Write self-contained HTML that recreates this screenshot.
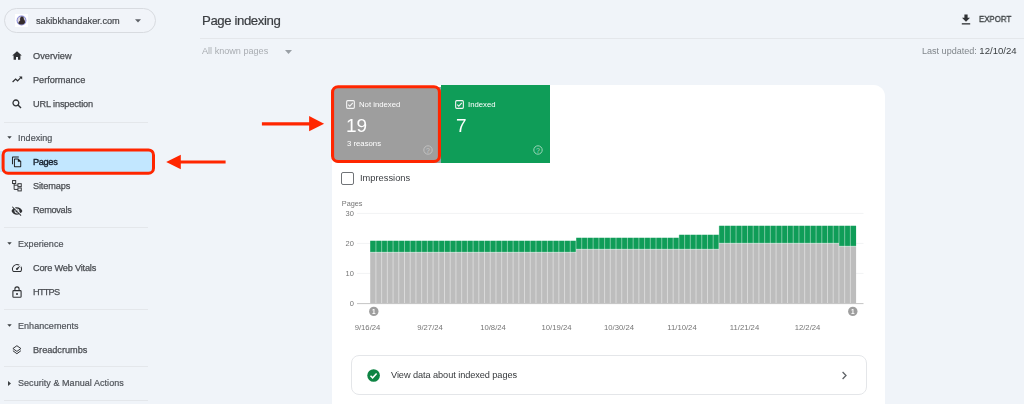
<!DOCTYPE html>
<html lang="en">
<head>
<meta charset="utf-8">
<title>Page indexing</title>
<style>
*{box-sizing:border-box;margin:0;padding:0}
html,body{width:1024px;height:404px;overflow:hidden}
body{background:#f0f4f9;font-family:"Liberation Sans",sans-serif;color:#3c4043;position:relative}
.abs{position:absolute}
.t{position:absolute;white-space:nowrap;line-height:1;will-change:transform}
.nav{font-size:9.2px;font-weight:normal;color:#4a4d52;-webkit-text-stroke:.25px #4a4d52}
.sec{font-size:9px;font-weight:normal;color:#50545a;-webkit-text-stroke:.2px #50545a;letter-spacing:.05px}
.div{position:absolute;height:1px;background:#e4e7eb;left:4px;width:144px}
.ico{position:absolute}
</style>
</head>
<body>

<!-- property selector -->
<div class="abs" style="left:3.6px;top:7.7px;width:152px;height:25.4px;border:1px solid #d8dbe0;border-radius:13px;background:#f1f4f9"></div>
<div class="abs" style="left:14.6px;top:13.8px;width:13.5px;height:13.3px;background:#fff"></div>
<svg class="ico" style="left:16px;top:14.7px" width="11" height="11" viewBox="0 0 11 11"><circle cx="5.5" cy="5.5" r="4.9" fill="#7d80d8"/><circle cx="5.5" cy="5.5" r="4" fill="#ddd6dc"/><path d="M5.9 1.6C7.4 1.6 8 2.8 7.8 4.2C8.9 5 9.3 6.6 8.9 8C7.9 9.2 6.6 9.6 5.5 9.6C4.4 9.6 3.2 9.2 2.3 8.2C2.6 6.8 3.4 6.2 4.2 5.6C3.8 3.6 4.4 1.6 5.9 1.6Z" fill="#352c2d"/></svg>
<div class="t" style="left:35.8px;top:17.1px;font-size:9.2px;color:#45484d;-webkit-text-stroke:.2px #45484d">sakibkhandaker.com</div>
<svg class="ico" style="left:135px;top:19px" width="6" height="4" viewBox="0 0 6 4"><path d="M0 0.3H6L3 3.6Z" fill="#5f6368"/></svg>

<!-- nav -->
<svg class="ico" style="left:12px;top:51px" width="10" height="9" viewBox="0 0 10 9"><path d="M5 0.2L0.2 4.6H1.6V8.8H4V6H6V8.8H8.4V4.6H9.8Z" fill="#2f3134"/></svg>
<div class="t nav" style="left:32.8px;top:51.8px;letter-spacing:0.05px">Overview</div>

<svg class="ico" style="left:12px;top:76px" width="11" height="7" viewBox="0 0 11 7"><path d="M0.6 6L3.6 3L5.6 4.8L9.2 1.2" fill="none" stroke="#2f3134" stroke-width="1.2"/><path d="M7 0.4H10.2V3.6Z" fill="#2f3134"/></svg>
<div class="t nav" style="left:32.8px;top:76.1px;letter-spacing:-0.03px">Performance</div>

<svg class="ico" style="left:12px;top:99px" width="10" height="10" viewBox="0 0 10 10"><circle cx="3.9" cy="3.9" r="2.9" fill="none" stroke="#2f3134" stroke-width="1.3"/><path d="M6 6L9 9" stroke="#2f3134" stroke-width="1.4"/></svg>
<div class="t nav" style="left:32.8px;top:100.4px;letter-spacing:-0.14px">URL inspection</div>

<div class="div" style="top:121.5px"></div>

<svg class="ico" style="left:7px;top:135.5px" width="5" height="3" viewBox="0 0 5 3"><path d="M0.3 0.2H4.7L2.5 2.8Z" fill="#3c4043"/></svg>
<div class="t sec" style="left:18.3px;top:134.0px">Indexing</div>

<!-- Pages highlighted -->
<div class="abs" style="left:0;top:151.4px;width:5px;height:20.4px;background:#c2e7ff"></div>
<svg class="ico" style="left:0;top:146px" width="160" height="32" viewBox="0 146 160 32"><rect x="3.1" y="149.9" width="150.4" height="23.3" rx="5" fill="#c2e7ff" stroke="#ff2600" stroke-width="3"/></svg>
<svg class="ico" style="left:10.7px;top:156.3px" width="11.7" height="11.7" viewBox="0 0 24 24"><path fill="#1f1f1f" d="M16 1H4c-1.1 0-2 .9-2 2v14h2V3h12V1zm-1 4H8c-1.1 0-1.99.9-1.99 2L6 21c0 1.1.89 2 1.99 2H19c1.1 0 2-.9 2-2V11l-6-6zM8 21V7h6v5h5v9H8z"/></svg>
<div class="t nav" style="left:32.8px;top:157.6px;color:#17212e;-webkit-text-stroke:.38px #17212e;letter-spacing:-0.33px">Pages</div>

<svg class="ico" style="left:11.6px;top:180.2px" width="10.2" height="11.7" viewBox="0 0 11 12" preserveAspectRatio="none"><rect x="0.6" y="0.6" width="3.4" height="3" fill="none" stroke="#2f3134" stroke-width="1"/><rect x="6.4" y="3.8" width="3.6" height="3" fill="none" stroke="#2f3134" stroke-width="1"/><rect x="6.4" y="8.2" width="3.6" height="3" fill="none" stroke="#2f3134" stroke-width="1"/><path d="M2.3 3.6V9.7H6.4M2.3 5.3H6.4" fill="none" stroke="#2f3134" stroke-width="1"/></svg>
<div class="t nav" style="left:32.8px;top:182.1px;letter-spacing:-0.15px">Sitemaps</div>

<svg class="ico" style="left:11.1px;top:204.5px" width="11.9" height="11.9" viewBox="0 0 24 24"><path fill="#2f3134" d="M12 7c2.76 0 5 2.24 5 5 0 .65-.13 1.26-.36 1.83l2.92 2.92c1.51-1.26 2.7-2.89 3.43-4.75-1.73-4.39-6-7.5-11-7.5-1.4 0-2.74.25-3.98.7l2.16 2.16C10.74 7.13 11.35 7 12 7zM2 4.27l2.28 2.28.46.46C3.08 8.3 1.78 10.02 1 12c1.73 4.39 6 7.5 11 7.5 1.55 0 3.03-.3 4.38-.84l.42.42L19.73 22 21 20.73 3.27 3 2 4.27zM7.53 9.8l1.55 1.55c-.05.21-.08.43-.08.65 0 1.66 1.34 3 3 3 .22 0 .44-.03.65-.08l1.55 1.55c-.67.33-1.41.53-2.2.53-2.76 0-5-2.24-5-5 0-.79.2-1.53.53-2.2zm4.31-.78l3.15 3.15.02-.16c0-1.66-1.34-3-3-3l-.17.01z"/></svg>
<div class="t nav" style="left:32.8px;top:206.4px;letter-spacing:-0.3px">Removals</div>

<div class="div" style="top:226.5px"></div>

<svg class="ico" style="left:7px;top:241.5px" width="5" height="3" viewBox="0 0 5 3"><path d="M0.3 0.2H4.7L2.5 2.8Z" fill="#3c4043"/></svg>
<div class="t sec" style="left:18.3px;top:240.0px">Experience</div>

<svg class="ico" style="left:10.9px;top:261.8px" width="12" height="12" viewBox="0 0 24 24"><path fill="#2f3134" d="M20.38 8.57l-1.23 1.85a8 8 0 0 1-.22 7.58H5.07A8 8 0 0 1 15.58 6.85l1.85-1.23A10 10 0 0 0 3.35 19a2 2 0 0 0 1.72 1h13.85a2 2 0 0 0 1.74-1 10 10 0 0 0-.27-10.44zm-9.79 6.84a2 2 0 0 0 2.83 0l5.66-8.49-8.49 5.66a2 2 0 0 0 0 2.83z"/></svg>
<div class="t nav" style="left:32.8px;top:264.0px;letter-spacing:-0.2px">Core Web Vitals</div>

<svg class="ico" style="left:12px;top:285.5px" width="10" height="12" viewBox="0 0 10 12"><rect x="0.9" y="4.6" width="8.2" height="6.6" rx="0.8" fill="none" stroke="#2f3134" stroke-width="1.1"/><path d="M2.9 4.6V3A2.1 2.1 0 0 1 7.1 3V4.6" fill="none" stroke="#2f3134" stroke-width="1.1"/><circle cx="5" cy="7.9" r="1" fill="#2f3134"/></svg>
<div class="t nav" style="left:32.8px;top:288.4px;letter-spacing:-0.75px">HTTPS</div>

<div class="div" style="top:308.5px"></div>

<svg class="ico" style="left:7px;top:323.5px" width="5" height="3" viewBox="0 0 5 3"><path d="M0.3 0.2H4.7L2.5 2.8Z" fill="#3c4043"/></svg>
<div class="t sec" style="left:18.3px;top:321.6px">Enhancements</div>

<svg class="ico" style="left:12.1px;top:344.8px" width="9.8" height="9.8" viewBox="0 0 11 11"><path d="M5.5 0.8L10 4L5.5 7.2L1 4Z" fill="none" stroke="#2f3134" stroke-width="1.1"/><path d="M1 6.4L5.5 9.8L10 6.4" fill="none" stroke="#2f3134" stroke-width="1.1"/></svg>
<div class="t nav" style="left:32.8px;top:346.0px;letter-spacing:-0.03px">Breadcrumbs</div>

<div class="div" style="top:366.4px"></div>

<svg class="ico" style="left:8px;top:380.5px" width="3" height="5" viewBox="0 0 3 5"><path d="M0 0V5L3 2.5Z" fill="#3c4043"/></svg>
<div class="t sec" style="left:18.3px;top:379.1px">Security &amp; Manual Actions</div>

<div class="div" style="top:399.9px"></div>

<!-- red arrow to Pages -->
<svg class="ico" style="left:163.6px;top:152px" width="64" height="20" viewBox="0 0 64 20"><path d="M15 10H61.6" stroke="#ff2600" stroke-width="3.2"/><path d="M2.2 10L16.8 2.7V17.2Z" fill="#ff2600"/></svg>

<!-- header -->
<div class="t" style="left:202px;top:14.3px;font-size:13.2px;letter-spacing:-.4px;color:#3a3d41;font-weight:normal;-webkit-text-stroke:.2px #3a3d41">Page indexing</div>
<div class="abs" style="left:200px;top:38.2px;width:824px;height:1px;background:#e4e7eb"></div>
<div class="t" style="left:202.1px;top:47.4px;font-size:9.1px;color:#a9adb2">All known pages</div>
<svg class="ico" style="left:285.2px;top:49.6px" width="7" height="4" viewBox="0 0 7 4"><path d="M0 0H7L3.5 4Z" fill="#9aa0a6"/></svg>

<svg class="ico" style="left:961px;top:14px" width="10" height="11" viewBox="0 0 10 11"><path d="M3.4 0.4H6.6V3.8H9L5 7.8L1 3.8H3.4Z" fill="#2f3134"/><rect x="0.8" y="9.2" width="8.4" height="1.3" fill="#2f3134"/></svg>
<div class="t" style="left:978.6px;top:15.1px;font-size:8.9px;color:#3c4043;-webkit-text-stroke:.32px #3c4043;transform:scaleX(.885);transform-origin:0 0">EXPORT</div>

<div class="t" style="right:7.3px;top:46.1px;font-size:9.05px;color:#80868b">Last updated: <span style="color:#3c4043;font-size:9.6px">12/10/24</span></div>

<!-- card -->
<div class="abs" style="left:331.8px;top:85.3px;width:553.2px;height:330px;background:#fff;border-radius:6px 11.5px 0 0"></div>

<!-- tiles -->
<div class="abs" style="left:332.5px;top:86.5px;width:108.5px;height:76.1px;background:#9e9e9e;border-radius:6px 0 0 6px"></div>
<div class="abs" style="left:441px;top:85.3px;width:109.2px;height:77.3px;background:#0f9d58"></div>
<svg class="ico" style="left:328px;top:82px" width="118" height="84" viewBox="328 82 118 84"><rect x="332.55" y="86.75" width="106.9" height="74.7" rx="5.5" fill="none" stroke="#ff2600" stroke-width="3.1"/></svg>

<!-- red arrow to tile -->
<svg class="ico" style="left:260px;top:114px" width="66" height="20" viewBox="0 0 66 20"><path d="M1.9 9.8H50" stroke="#ff2600" stroke-width="3.3"/><path d="M64.1 9.7L49.1 2.1V17.2Z" fill="#ff2600"/></svg>

<!-- tile text -->
<svg class="ico" style="left:346px;top:100px" width="9" height="9" viewBox="0 0 9 9"><rect x="0.65" y="0.65" width="7.7" height="7.7" rx="1" fill="none" stroke="#f4f4f4" stroke-width="1.1"/><path d="M2.2 4.6L3.8 6.1L6.8 2.8" fill="none" stroke="#f4f4f4" stroke-width="1.1"/></svg>
<div class="t" style="left:358.5px;top:101.1px;font-size:7.75px;color:#fff">Not indexed</div>
<div class="t" style="left:346.4px;top:116px;font-size:19px;color:#fff">19</div>
<div class="t" style="left:346.5px;top:140.4px;font-size:7.75px;color:#fff">3 reasons</div>
<svg class="ico" style="left:423px;top:145px" width="10" height="10" viewBox="0 0 10 10"><circle cx="5" cy="5" r="4.2" fill="none" stroke="#c9c9c9" stroke-width="0.8"/><text x="5" y="7.6" font-family="Liberation Sans, sans-serif" font-size="7" text-anchor="middle" fill="#c9c9c9">?</text></svg>

<svg class="ico" style="left:455px;top:100px" width="9" height="9" viewBox="0 0 9 9"><rect x="0.65" y="0.65" width="7.7" height="7.7" rx="1" fill="none" stroke="#f4f4f4" stroke-width="1.1"/><path d="M2.2 4.6L3.8 6.1L6.8 2.8" fill="none" stroke="#f4f4f4" stroke-width="1.1"/></svg>
<div class="t" style="left:467.5px;top:101.1px;font-size:7.75px;color:#fff">Indexed</div>
<div class="t" style="left:455.7px;top:116px;font-size:19px;color:#fff">7</div>
<svg class="ico" style="left:532.5px;top:145px" width="10" height="10" viewBox="0 0 10 10"><circle cx="5" cy="5" r="4.2" fill="none" stroke="#a8dcc3" stroke-width="0.9"/><text x="5" y="7.6" font-family="Liberation Sans, sans-serif" font-size="7" text-anchor="middle" fill="#a8dcc3">?</text></svg>

<!-- impressions -->
<div class="abs" style="left:341.3px;top:172.4px;width:12.4px;height:12.2px;border:1.3px solid #707377;border-radius:2px;background:#fff"></div>
<div class="t" style="left:359.6px;top:174.2px;font-size:9.3px;color:#3a3d41">Impressions</div>

<!-- chart -->
<!--CHART-->
<svg class="ico" style="left:0;top:0" width="1024" height="404" viewBox="0 0 1024 404">
<g stroke="#f2f3f4" stroke-width="1"><path d="M357 213.4H863.5M357 243.4H863.5M357 273.4H863.5"/></g>
<path d="M370.20 252.3h5.72V303.3h-5.72ZM375.92 252.3h5.72V303.3h-5.72ZM381.63 252.3h5.72V303.3h-5.72ZM387.35 252.3h5.72V303.3h-5.72ZM393.07 252.3h5.72V303.3h-5.72ZM398.78 252.3h5.72V303.3h-5.72ZM404.50 252.3h5.72V303.3h-5.72ZM410.22 252.3h5.72V303.3h-5.72ZM415.93 252.3h5.72V303.3h-5.72ZM421.65 252.3h5.72V303.3h-5.72ZM427.36 252.3h5.72V303.3h-5.72ZM433.08 252.3h5.72V303.3h-5.72ZM438.80 252.3h5.72V303.3h-5.72ZM444.51 252.3h5.72V303.3h-5.72ZM450.23 252.3h5.72V303.3h-5.72ZM455.95 252.3h5.72V303.3h-5.72ZM461.66 252.3h5.72V303.3h-5.72ZM467.38 252.3h5.72V303.3h-5.72ZM473.10 252.3h5.72V303.3h-5.72ZM478.81 252.3h5.72V303.3h-5.72ZM484.53 252.3h5.72V303.3h-5.72ZM490.25 252.3h5.72V303.3h-5.72ZM495.96 252.3h5.72V303.3h-5.72ZM501.68 252.3h5.72V303.3h-5.72ZM507.40 252.3h5.72V303.3h-5.72ZM513.11 252.3h5.72V303.3h-5.72ZM518.83 252.3h5.72V303.3h-5.72ZM524.54 252.3h5.72V303.3h-5.72ZM530.26 252.3h5.72V303.3h-5.72ZM535.98 252.3h5.72V303.3h-5.72ZM541.69 252.3h5.72V303.3h-5.72ZM547.41 252.3h5.72V303.3h-5.72ZM553.13 252.3h5.72V303.3h-5.72ZM558.84 252.3h5.72V303.3h-5.72ZM564.56 252.3h5.72V303.3h-5.72ZM570.28 252.3h5.72V303.3h-5.72ZM575.99 249.3h5.72V303.3h-5.72ZM581.71 249.3h5.72V303.3h-5.72ZM587.43 249.3h5.72V303.3h-5.72ZM593.14 249.3h5.72V303.3h-5.72ZM598.86 249.3h5.72V303.3h-5.72ZM604.58 249.3h5.72V303.3h-5.72ZM610.29 249.3h5.72V303.3h-5.72ZM616.01 249.3h5.72V303.3h-5.72ZM621.72 249.3h5.72V303.3h-5.72ZM627.44 249.3h5.72V303.3h-5.72ZM633.16 249.3h5.72V303.3h-5.72ZM638.87 249.3h5.72V303.3h-5.72ZM644.59 249.3h5.72V303.3h-5.72ZM650.31 249.3h5.72V303.3h-5.72ZM656.02 249.3h5.72V303.3h-5.72ZM661.74 249.3h5.72V303.3h-5.72ZM667.46 249.3h5.72V303.3h-5.72ZM673.17 249.3h5.72V303.3h-5.72ZM678.89 249.3h5.72V303.3h-5.72ZM684.61 249.3h5.72V303.3h-5.72ZM690.32 249.3h5.72V303.3h-5.72ZM696.04 249.3h5.72V303.3h-5.72ZM701.76 249.3h5.72V303.3h-5.72ZM707.47 249.3h5.72V303.3h-5.72ZM713.19 249.3h5.72V303.3h-5.72ZM718.90 243.3h5.72V303.3h-5.72ZM724.62 243.3h5.72V303.3h-5.72ZM730.34 243.3h5.72V303.3h-5.72ZM736.05 243.3h5.72V303.3h-5.72ZM741.77 243.3h5.72V303.3h-5.72ZM747.49 243.3h5.72V303.3h-5.72ZM753.20 243.3h5.72V303.3h-5.72ZM758.92 243.3h5.72V303.3h-5.72ZM764.64 243.3h5.72V303.3h-5.72ZM770.35 243.3h5.72V303.3h-5.72ZM776.07 243.3h5.72V303.3h-5.72ZM781.79 243.3h5.72V303.3h-5.72ZM787.50 243.3h5.72V303.3h-5.72ZM793.22 243.3h5.72V303.3h-5.72ZM798.94 243.3h5.72V303.3h-5.72ZM804.65 243.3h5.72V303.3h-5.72ZM810.37 243.3h5.72V303.3h-5.72ZM816.08 243.3h5.72V303.3h-5.72ZM821.80 243.3h5.72V303.3h-5.72ZM827.52 243.3h5.72V303.3h-5.72ZM833.23 243.3h5.72V303.3h-5.72ZM838.95 246.3h5.72V303.3h-5.72ZM844.67 246.3h5.72V303.3h-5.72ZM850.38 246.3h5.72V303.3h-5.72Z" fill="#bdbdbd"/>
<path d="M370.20 240.7h5.72V252.3h-5.72ZM375.92 240.7h5.72V252.3h-5.72ZM381.63 240.7h5.72V252.3h-5.72ZM387.35 240.7h5.72V252.3h-5.72ZM393.07 240.7h5.72V252.3h-5.72ZM398.78 240.7h5.72V252.3h-5.72ZM404.50 240.7h5.72V252.3h-5.72ZM410.22 240.7h5.72V252.3h-5.72ZM415.93 240.7h5.72V252.3h-5.72ZM421.65 240.7h5.72V252.3h-5.72ZM427.36 240.7h5.72V252.3h-5.72ZM433.08 240.7h5.72V252.3h-5.72ZM438.80 240.7h5.72V252.3h-5.72ZM444.51 240.7h5.72V252.3h-5.72ZM450.23 240.7h5.72V252.3h-5.72ZM455.95 240.7h5.72V252.3h-5.72ZM461.66 240.7h5.72V252.3h-5.72ZM467.38 240.7h5.72V252.3h-5.72ZM473.10 240.7h5.72V252.3h-5.72ZM478.81 240.7h5.72V252.3h-5.72ZM484.53 240.7h5.72V252.3h-5.72ZM490.25 240.7h5.72V252.3h-5.72ZM495.96 240.7h5.72V252.3h-5.72ZM501.68 240.7h5.72V252.3h-5.72ZM507.40 240.7h5.72V252.3h-5.72ZM513.11 240.7h5.72V252.3h-5.72ZM518.83 240.7h5.72V252.3h-5.72ZM524.54 240.7h5.72V252.3h-5.72ZM530.26 240.7h5.72V252.3h-5.72ZM535.98 240.7h5.72V252.3h-5.72ZM541.69 240.7h5.72V252.3h-5.72ZM547.41 240.7h5.72V252.3h-5.72ZM553.13 240.7h5.72V252.3h-5.72ZM558.84 240.7h5.72V252.3h-5.72ZM564.56 240.7h5.72V252.3h-5.72ZM570.28 240.7h5.72V252.3h-5.72ZM575.99 237.7h5.72V249.3h-5.72ZM581.71 237.7h5.72V249.3h-5.72ZM587.43 237.7h5.72V249.3h-5.72ZM593.14 237.7h5.72V249.3h-5.72ZM598.86 237.7h5.72V249.3h-5.72ZM604.58 237.7h5.72V249.3h-5.72ZM610.29 237.7h5.72V249.3h-5.72ZM616.01 237.7h5.72V249.3h-5.72ZM621.72 237.7h5.72V249.3h-5.72ZM627.44 237.7h5.72V249.3h-5.72ZM633.16 237.7h5.72V249.3h-5.72ZM638.87 237.7h5.72V249.3h-5.72ZM644.59 237.7h5.72V249.3h-5.72ZM650.31 237.7h5.72V249.3h-5.72ZM656.02 237.7h5.72V249.3h-5.72ZM661.74 237.7h5.72V249.3h-5.72ZM667.46 237.7h5.72V249.3h-5.72ZM673.17 237.7h5.72V249.3h-5.72ZM678.89 234.7h5.72V249.3h-5.72ZM684.61 234.7h5.72V249.3h-5.72ZM690.32 234.7h5.72V249.3h-5.72ZM696.04 234.7h5.72V249.3h-5.72ZM701.76 234.7h5.72V249.3h-5.72ZM707.47 234.7h5.72V249.3h-5.72ZM713.19 234.7h5.72V249.3h-5.72ZM718.90 225.7h5.72V243.3h-5.72ZM724.62 225.7h5.72V243.3h-5.72ZM730.34 225.7h5.72V243.3h-5.72ZM736.05 225.7h5.72V243.3h-5.72ZM741.77 225.7h5.72V243.3h-5.72ZM747.49 225.7h5.72V243.3h-5.72ZM753.20 225.7h5.72V243.3h-5.72ZM758.92 225.7h5.72V243.3h-5.72ZM764.64 225.7h5.72V243.3h-5.72ZM770.35 225.7h5.72V243.3h-5.72ZM776.07 225.7h5.72V243.3h-5.72ZM781.79 225.7h5.72V243.3h-5.72ZM787.50 225.7h5.72V243.3h-5.72ZM793.22 225.7h5.72V243.3h-5.72ZM798.94 225.7h5.72V243.3h-5.72ZM804.65 225.7h5.72V243.3h-5.72ZM810.37 225.7h5.72V243.3h-5.72ZM816.08 225.7h5.72V243.3h-5.72ZM821.80 225.7h5.72V243.3h-5.72ZM827.52 225.7h5.72V243.3h-5.72ZM833.23 225.7h5.72V243.3h-5.72ZM838.95 225.7h5.72V246.3h-5.72ZM844.67 225.7h5.72V246.3h-5.72ZM850.38 225.7h5.72V246.3h-5.72Z" fill="#0f9d58"/>
<path d="M370.20 252.3h5.72M375.92 252.3h5.72M381.63 252.3h5.72M387.35 252.3h5.72M393.07 252.3h5.72M398.78 252.3h5.72M404.50 252.3h5.72M410.22 252.3h5.72M415.93 252.3h5.72M421.65 252.3h5.72M427.36 252.3h5.72M433.08 252.3h5.72M438.80 252.3h5.72M444.51 252.3h5.72M450.23 252.3h5.72M455.95 252.3h5.72M461.66 252.3h5.72M467.38 252.3h5.72M473.10 252.3h5.72M478.81 252.3h5.72M484.53 252.3h5.72M490.25 252.3h5.72M495.96 252.3h5.72M501.68 252.3h5.72M507.40 252.3h5.72M513.11 252.3h5.72M518.83 252.3h5.72M524.54 252.3h5.72M530.26 252.3h5.72M535.98 252.3h5.72M541.69 252.3h5.72M547.41 252.3h5.72M553.13 252.3h5.72M558.84 252.3h5.72M564.56 252.3h5.72M570.28 252.3h5.72M575.99 249.3h5.72M581.71 249.3h5.72M587.43 249.3h5.72M593.14 249.3h5.72M598.86 249.3h5.72M604.58 249.3h5.72M610.29 249.3h5.72M616.01 249.3h5.72M621.72 249.3h5.72M627.44 249.3h5.72M633.16 249.3h5.72M638.87 249.3h5.72M644.59 249.3h5.72M650.31 249.3h5.72M656.02 249.3h5.72M661.74 249.3h5.72M667.46 249.3h5.72M673.17 249.3h5.72M678.89 249.3h5.72M684.61 249.3h5.72M690.32 249.3h5.72M696.04 249.3h5.72M701.76 249.3h5.72M707.47 249.3h5.72M713.19 249.3h5.72M718.90 243.3h5.72M724.62 243.3h5.72M730.34 243.3h5.72M736.05 243.3h5.72M741.77 243.3h5.72M747.49 243.3h5.72M753.20 243.3h5.72M758.92 243.3h5.72M764.64 243.3h5.72M770.35 243.3h5.72M776.07 243.3h5.72M781.79 243.3h5.72M787.50 243.3h5.72M793.22 243.3h5.72M798.94 243.3h5.72M804.65 243.3h5.72M810.37 243.3h5.72M816.08 243.3h5.72M821.80 243.3h5.72M827.52 243.3h5.72M833.23 243.3h5.72M838.95 246.3h5.72M844.67 246.3h5.72M850.38 246.3h5.72" stroke="#fff" stroke-width="0.6" stroke-opacity="0.8" fill="none"/>
<path d="M375.92 222.3V303.3M381.63 222.3V303.3M387.35 222.3V303.3M393.07 222.3V303.3M398.78 222.3V303.3M404.50 222.3V303.3M410.22 222.3V303.3M415.93 222.3V303.3M421.65 222.3V303.3M427.36 222.3V303.3M433.08 222.3V303.3M438.80 222.3V303.3M444.51 222.3V303.3M450.23 222.3V303.3M455.95 222.3V303.3M461.66 222.3V303.3M467.38 222.3V303.3M473.10 222.3V303.3M478.81 222.3V303.3M484.53 222.3V303.3M490.25 222.3V303.3M495.96 222.3V303.3M501.68 222.3V303.3M507.40 222.3V303.3M513.11 222.3V303.3M518.83 222.3V303.3M524.54 222.3V303.3M530.26 222.3V303.3M535.98 222.3V303.3M541.69 222.3V303.3M547.41 222.3V303.3M553.13 222.3V303.3M558.84 222.3V303.3M564.56 222.3V303.3M570.28 222.3V303.3M575.99 222.3V303.3M581.71 222.3V303.3M587.43 222.3V303.3M593.14 222.3V303.3M598.86 222.3V303.3M604.58 222.3V303.3M610.29 222.3V303.3M616.01 222.3V303.3M621.72 222.3V303.3M627.44 222.3V303.3M633.16 222.3V303.3M638.87 222.3V303.3M644.59 222.3V303.3M650.31 222.3V303.3M656.02 222.3V303.3M661.74 222.3V303.3M667.46 222.3V303.3M673.17 222.3V303.3M678.89 222.3V303.3M684.61 222.3V303.3M690.32 222.3V303.3M696.04 222.3V303.3M701.76 222.3V303.3M707.47 222.3V303.3M713.19 222.3V303.3M718.90 222.3V303.3M724.62 222.3V303.3M730.34 222.3V303.3M736.05 222.3V303.3M741.77 222.3V303.3M747.49 222.3V303.3M753.20 222.3V303.3M758.92 222.3V303.3M764.64 222.3V303.3M770.35 222.3V303.3M776.07 222.3V303.3M781.79 222.3V303.3M787.50 222.3V303.3M793.22 222.3V303.3M798.94 222.3V303.3M804.65 222.3V303.3M810.37 222.3V303.3M816.08 222.3V303.3M821.80 222.3V303.3M827.52 222.3V303.3M833.23 222.3V303.3M838.95 222.3V303.3M844.67 222.3V303.3M850.38 222.3V303.3" stroke="#fff" stroke-width="0.8" stroke-opacity="0.55" fill="none"/>
<path d="M357 303.6H863.5" stroke="#bdbdbd" stroke-width="0.9"/>
<circle cx="373.8" cy="311.4" r="4.7" fill="#9e9e9e"/><circle cx="852.8" cy="311.4" r="4.7" fill="#9e9e9e"/>
<g font-family="Liberation Sans, sans-serif" font-size="6.4" fill="#fff" font-weight="bold" text-anchor="middle"><text x="373.7" y="313.7">1</text><text x="852.7" y="313.7">1</text></g>
<g font-family="Liberation Sans, sans-serif" font-size="7.5" fill="#757575" text-anchor="end"><text x="353.9" y="216.2">30</text><text x="353.9" y="246.2">20</text><text x="353.9" y="276.2">10</text><text x="353.9" y="306.2">0</text></g>
<g font-family="Liberation Sans, sans-serif" font-size="7.7" fill="#757575" text-anchor="middle"><text x="367.5" y="329.7">9/16/24</text><text x="430" y="329.7">9/27/24</text><text x="493" y="329.7">10/8/24</text><text x="556.5" y="329.7">10/19/24</text><text x="619" y="329.7">10/30/24</text><text x="682" y="329.7">11/10/24</text><text x="744.5" y="329.7">11/21/24</text><text x="807.5" y="329.7">12/2/24</text></g>
<text x="341.8" y="205.9" font-family="Liberation Sans, sans-serif" font-size="7.3" fill="#757575">Pages</text>
</svg>
<!--/CHART-->
<!-- view data row -->
<div class="abs" style="left:351.2px;top:355px;width:516px;height:40.3px;border:1px solid #e4e6e9;border-radius:8px;background:#fff"></div>
<svg class="ico" style="left:367px;top:369px" width="13" height="13" viewBox="0 0 13 13"><circle cx="6.6" cy="6.5" r="6.3" fill="#0e8444"/><path d="M3.5 6.7L5.6 8.8L9.6 4.5" fill="none" stroke="#fff" stroke-width="1.5"/></svg>
<div class="t" style="left:390.6px;top:371.2px;font-size:9.2px;letter-spacing:-.07px;color:#35383b">View data about indexed pages</div>
<svg class="ico" style="left:841px;top:371px" width="7" height="9" viewBox="0 0 7 9"><path d="M1.6 1L5 4.5L1.6 8" fill="none" stroke="#5f6368" stroke-width="1.3"/></svg>

</body>
</html>
